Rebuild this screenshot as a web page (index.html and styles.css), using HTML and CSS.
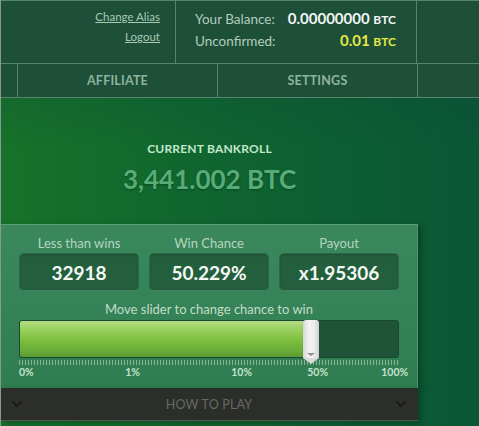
FILE: index.html
```html
<!DOCTYPE html>
<html>
<head>
<meta charset="utf-8">
<link rel="stylesheet" href="styles.css">
</head>
<body>
<div class="page">
  <header class="top">
    <div class="row1">
      <div class="links">
        <a href="#">Change Alias</a>
        <a href="#">Logout</a>
      </div>
      <div class="balance">
        <div class="bal-row"><span class="lbl">Your Balance:</span><span class="val">0.00000000 <small>BTC</small></span></div>
        <div class="bal-row"><span class="lbl">Unconfirmed:</span><span class="val yellow">0.01 <small>BTC</small></span></div>
      </div>
      <div class="cell-empty"></div>
    </div>
    <nav class="row2">
      <div class="nav-spacer"></div>
      <a href="#" class="nav-item">AFFILIATE</a>
      <a href="#" class="nav-item">SETTINGS</a>
      <div class="nav-rest"></div>
    </nav>
  </header>
  <main class="main">
    <div class="column">
      <div class="bankroll">
        <div class="bankroll-title">CURRENT BANKROLL</div>
        <div class="bankroll-value">3,441.002 BTC</div>
      </div>
      <section class="panel">
        <div class="fields">
          <div class="field">
            <div class="field-label">Less than wins</div>
            <div class="field-box">32918</div>
          </div>
          <div class="field">
            <div class="field-label">Win Chance</div>
            <div class="field-box">50.229%</div>
          </div>
          <div class="field">
            <div class="field-label">Payout</div>
            <div class="field-box">x1.95306</div>
          </div>
        </div>
        <div class="slider-label">Move slider to change chance to win</div>
        <div class="slider">
          <div class="track">
            <div class="fill" style="width:75.1%"></div>
          </div>
          <div class="thumb" style="left:75.1%"></div>
          <div class="ticks"></div>
          <div class="scale">
            <span class="mark first" style="left:0%">0%</span>
            <span class="mark" style="left:29.9%">1%</span>
            <span class="mark" style="left:58.6%">10%</span>
            <span class="mark" style="left:78.6%">50%</span>
            <span class="mark last" style="left:100%">100%</span>
          </div>
        </div>
      </section>
      <div class="howto">
        <svg class="chev" width="12" height="8" viewBox="0 0 12 8"><path d="M1.5 1.5 L6 6 L10.5 1.5" fill="none" stroke="#1b1c19" stroke-width="2.2"/></svg>
        <span class="howto-text">HOW TO PLAY</span>
        <svg class="chev" width="12" height="8" viewBox="0 0 12 8"><path d="M1.5 1.5 L6 6 L10.5 1.5" fill="none" stroke="#1b1c19" stroke-width="2.2"/></svg>
      </div>
    </div>
  </main>
</div>
</body>
</html>
```

FILE: styles.css
```css
html, body {
  margin: 0;
  padding: 0;
}
body {
  font-family: Lato, "Open Sans", sans-serif;
  background: #0b5836;
}
.page {
  width: 479px;
  height: 426px;
  overflow: hidden;
  box-sizing: border-box;
  border-left: 1px solid #8b9890;
  background:
    linear-gradient(180deg, rgba(12, 70, 55, 0.6) 0px, rgba(12, 70, 55, 0) 150px),
    linear-gradient(90deg, #17732a 0%, #0f652f 45%, #0a5637 100%);
}
.top {
  background: #1e4f39;
  border-top: 1px solid #56846c;
}
.row1 {
  display: grid;
  grid-template-columns: 175px 241px 1fr;
  height: 62px;
  border-bottom: 1px solid #56846c;
}
.links {
  border-right: 1px solid #56846c;
  display: flex;
  flex-direction: column;
  align-items: flex-end;
  padding: 6px 15px 0 0;
}
.links a {
  font-size: 11.5px;
  line-height: 20px;
  color: #a9c9b6;
  text-decoration: underline;
}
.balance {
  border-right: 1px solid #56846c;
  padding: 7px 20px 0 19px;
  display: flex;
  flex-direction: column;
}
.bal-row {
  display: flex;
  justify-content: space-between;
  align-items: baseline;
  line-height: 20px;
}
.lbl {
  font-size: 13.5px;
  color: #b3cdbd;
}
.val {
  font-size: 15px;
  font-weight: 700;
  color: #f2f6f3;
}
.val small {
  font-size: 12px;
  font-weight: 700;
}
.val.yellow {
  color: #e6e844;
}
.row2 {
  display: grid;
  grid-template-columns: 17px 200px 200px 1fr;
  height: 33px;
  border-bottom: 1px solid #56846c;
}
.nav-spacer, .nav-item {
  border-right: 1px solid #56846c;
}
.nav-item {
  display: flex;
  align-items: center;
  justify-content: center;
  font-size: 12.5px;
  font-weight: 700;
  letter-spacing: 0.2px;
  color: #8db59c;
  text-decoration: none;
}
.main {
  display: block;
}
.column {
  width: 417px;
  display: flex;
  flex-direction: column;
}
.bankroll {
  padding-top: 43px;
  text-align: center;
  height: 126px;
  box-sizing: border-box;
}
.bankroll-title {
  font-size: 12px;
  font-weight: 700;
  line-height: 16px;
  color: #c4e6cf;
  letter-spacing: 0.2px;
}
.bankroll-value {
  margin-top: 7px;
  font-size: 26px;
  font-weight: 700;
  line-height: 30px;
  color: #58ac78;
  text-shadow: 0 1px 2px rgba(0, 40, 20, 0.45);
}
.panel {
  background: linear-gradient(180deg, #3a885c 0%, #2f7d51 100%);
  border-top: 1px solid #5b9f78;
  border-right: 1px solid #4c9570;
  box-shadow: 3px 2px 6px rgba(0, 30, 15, 0.35);
  padding: 10px 18px 11px 18px;
  height: 164px;
  box-sizing: border-box;
}
.fields {
  display: grid;
  grid-template-columns: repeat(3, 120px);
  gap: 10px;
}
.field-label {
  text-align: center;
  font-size: 13px;
  line-height: 16px;
  color: #b6d5c0;
  margin-bottom: 2px;
}
.field-box {
  height: 38px;
  box-sizing: border-box;
  border-radius: 5px;
  background: #235f3d;
  border: 1px solid #2a6946;
  border-bottom-color: #3f8460;
  box-shadow: inset 0 1px 2px rgba(0, 0, 0, 0.15);
  display: flex;
  align-items: center;
  justify-content: center;
  font-size: 19px;
  font-weight: 700;
  color: #f4f8f5;
}
.slider-label {
  text-align: center;
  font-size: 13px;
  line-height: 16px;
  color: #c3dcca;
  margin-top: 10px;
}
.slider {
  position: relative;
  margin-top: 3px;
  width: 380px;
}
.track {
  height: 38px;
  box-sizing: border-box;
  border: 1px solid #174a30;
  border-radius: 3px;
  background: #1f5439;
  overflow: hidden;
}
.fill {
  height: 100%;
  background: linear-gradient(180deg, #b3dc85 0%, #98d05c 25%, #7cbd3e 55%, #6cb03a 80%, #5c9a34 100%);
}
.thumb {
  position: absolute;
  top: 0;
  width: 16px;
  height: 38px;
  margin-left: -1px;
  border-radius: 3px 3px 0 0;
  background: linear-gradient(90deg, #d8d8d8 0%, #f4f4f4 40%, #ececec 70%, #cfcfcf 100%);
  box-shadow: 0 0 1px rgba(0, 0, 0, 0.4);
}
.thumb::after {
  content: "";
  position: absolute;
  left: 0;
  top: 38px;
  border-left: 8px solid transparent;
  border-right: 8px solid transparent;
  border-top: 6px solid #dadada;
}
.thumb::before {
  content: "";
  position: absolute;
  left: 4px;
  top: 33px;
  border-left: 4px solid transparent;
  border-right: 4px solid transparent;
  border-top: 3px solid #8b8f8c;
}
.ticks {
  height: 5px;
  margin-top: 2px;
  background: repeating-linear-gradient(90deg, #86b597 0 1px, transparent 1px 3px);
}
.scale {
  position: relative;
  height: 13px;
  margin-top: 1px;
}
.mark {
  position: absolute;
  top: 0;
  transform: translateX(-50%);
  font-size: 10.5px;
  font-weight: 700;
  line-height: 13px;
  color: #c3e1cc;
  white-space: nowrap;
}
.mark.first {
  transform: none;
}
.mark.last {
  transform: translateX(-66%);
}
.howto {
  height: 33px;
  box-sizing: border-box;
  background: #2c2e2a;
  border-bottom: 1px solid #4f5a51;
  box-shadow: 3px 2px 6px rgba(0, 30, 15, 0.35);
  display: flex;
  align-items: center;
  justify-content: space-between;
  padding: 0 11px 0 10px;
}
.howto-text {
  font-size: 12.5px;
  color: #676b64;
  letter-spacing: 0.2px;
}
.chev {
  display: block;
}
```
